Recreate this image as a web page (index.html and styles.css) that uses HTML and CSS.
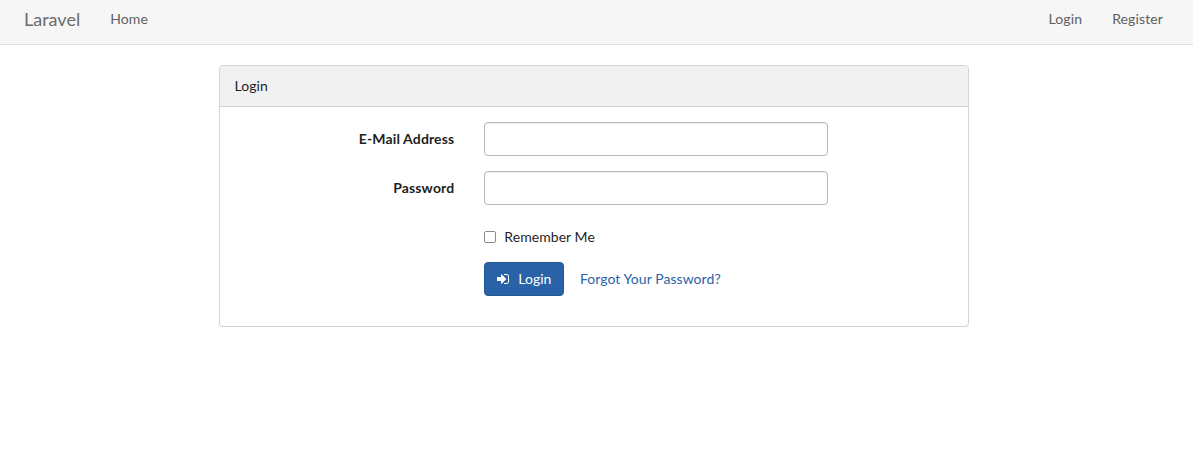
FILE: index.html
```html
<!DOCTYPE html>
<html lang="en">
<head>
<meta charset="utf-8">
<title>Login</title>
<link rel="stylesheet" href="styles.css">
</head>
<body>
<nav class="navbar">
  <a class="brand" href="#">Laravel</a>
  <a class="nav-link" href="#">Home</a>
  <div class="nav-right">
    <a class="nav-link" href="#">Login</a>
    <a class="nav-link" href="#">Register</a>
  </div>
</nav>
<main class="container">
  <section class="panel">
    <div class="panel-heading">Login</div>
    <form class="panel-body">
      <div class="form-row">
        <label class="field-label" for="email">E-Mail Address</label>
        <input class="field-input" id="email" type="email">
      </div>
      <div class="form-row">
        <label class="field-label" for="password">Password</label>
        <input class="field-input" id="password" type="password">
      </div>
      <div class="form-row">
        <div class="field-offset remember">
          <label class="remember-label"><input class="remember-box" type="checkbox">Remember Me</label>
        </div>
      </div>
      <div class="form-row">
        <div class="field-offset actions">
          <button class="btn" type="button">
            <svg class="btn-icon" viewBox="0 0 1536 1792" aria-hidden="true"><path d="M1184 896q0 26-19 45l-544 544q-19 19-45 19t-45-19-19-45v-288h-448q-26 0-45-19t-19-45v-384q0-26 19-45t45-19h448v-288q0-26 19-45t45-19 45 19l544 544q19 19 19 45zm352-352v704q0 119-84.5 203.5t-203.5 84.5h-320q-13 0-22.5-9.5t-9.5-22.5q0-4-1-20t-.5-26.5 3-23.5 10-19.5 20.5-6.5h320q66 0 113-47t47-113v-704q0-66-47-113t-113-47h-312l-11.5-1-11.5-3-8-5.5-7-9-2-13.5q0-4-1-20t-.5-26.5 3-23.5 10-19.5 20.5-6.5h320q119 0 203.5 84.5t84.5 203.5z"/></svg>Login
          </button>
          <a class="btn-link" href="#">Forgot Your Password?</a>
        </div>
      </div>
    </form>
  </section>
</main>
</body>
</html>
```

FILE: styles.css
```css
* {
  box-sizing: border-box;
}

body {
  margin: 0;
  background: #fff;
  color: #1f1f1f;
  font-family: Lato, "Liberation Sans", sans-serif;
  font-size: 14px;
  line-height: 20px;
  letter-spacing: 0.06px;
}

a {
  text-decoration: none;
}

.navbar {
  display: flex;
  align-items: flex-start;
  height: 45px;
  padding: 9px 15px 0 24px;
  background: #f6f6f6;
  border-bottom: 1px solid #e2e2e2;
}

.brand {
  margin-right: 15px;
  color: #6b6b6b;
  font-size: 18px;
  letter-spacing: 0;
}

.nav-link {
  padding: 0 15px;
  color: #5f5f5f;
  letter-spacing: 0.12px;
}

.nav-right {
  display: flex;
  margin-left: auto;
}

.container {
  width: 750px;
  margin: 20px 0 0 219px;
}

.panel {
  background: #fff;
  border: 1px solid #d3d3d3;
  border-radius: 4px;
  box-shadow: 0 1px 1px rgba(0, 0, 0, 0.05);
}

.panel-heading {
  height: 41px;
  padding: 10px 14.5px;
  background: #f1f1f1;
  border-bottom: 1px solid #d3d3d3;
  border-radius: 3px 3px 0 0;
}

.panel-body {
  padding: 15px 0;
}

.form-row {
  display: grid;
  grid-template-columns: 234.33px 344px;
  column-gap: 30px;
  align-items: center;
  margin-bottom: 15px;
}

.field-label {
  text-align: right;
  font-weight: 700;
  letter-spacing: 0.14px;
}

.field-input {
  width: 344px;
  height: 34px;
  padding: 6px 12px;
  border: 1px solid #b9b9b9;
  border-radius: 4px;
  box-shadow: inset 0 1px 1px rgba(0, 0, 0, 0.075);
  font: inherit;
}

.field-offset {
  grid-column: 2;
}

.remember {
  padding-top: 7px;
}

.remember-label {
  display: flex;
  align-items: center;
  height: 20px;
}

.remember-box {
  appearance: none;
  width: 12px;
  height: 12px;
  margin: 0 8px 0 0;
  background: #fff;
  border: 1px solid #8c8c8c;
  border-radius: 2px;
}

.actions {
  display: flex;
  align-items: center;
  white-space: nowrap;
}

.btn {
  display: inline-flex;
  align-items: center;
  height: 34px;
  padding: 6px 12px;
  background: #2a62a7;
  border: 1px solid #25578f;
  border-radius: 4px;
  color: #fff;
  font: inherit;
}

.btn-icon {
  width: 12px;
  height: 14px;
  margin-right: 9px;
  fill: currentColor;
}

.btn-link {
  padding: 7px 15.5px;
  color: #2a62a7;
}
```
